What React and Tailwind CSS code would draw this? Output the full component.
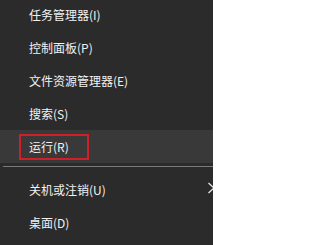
import React from "react";

const font = { fontFamily: '"Noto Sans CJK SC", "Noto Sans", sans-serif' };

function Row({ label }) {
  return (
    <div className="flex h-[33px] items-center pl-[29px] text-[12px] text-[#f2f2f2]">
      {label}
    </div>
  );
}

export default function App() {
  return (
    <div
      className="w-[213px] h-[245px] overflow-hidden bg-[#2b2b2b] select-none"
      style={font}
    >
      <div className="-mt-[2px]">
        <Row label="任务管理器(I)" />
        <Row label="控制面板(P)" />
        <Row label="文件资源管理器(E)" />
        <Row label="搜索(S)" />
        <div className="flex h-[33px] items-center bg-[#393939] pl-[19px] text-[12px] text-[#f2f2f2]">
          <div className="flex h-[26px] w-[70px] items-center border-2 border-[#cf1f28] pl-[8px]">
            运行(R)
          </div>
        </div>
      </div>
      <div className="mt-[3px] ml-[3px] h-px bg-[#7a7a7a]" />
      <div className="mt-[6px] flex h-[33px] items-center pl-[29px] text-[12px] text-[#f2f2f2]">
        <span>关机或注销(U)</span>
        <svg
          className="ml-auto -mr-[3px] -mt-[4px]"
          width="9"
          height="12"
          viewBox="0 0 9 12"
          fill="none"
        >
          <path d="M1.5 1 L7 6 L1.5 11" stroke="#e6e8f0" strokeWidth="1.3" />
        </svg>
      </div>
      <Row label="桌面(D)" />
    </div>
  );
}
